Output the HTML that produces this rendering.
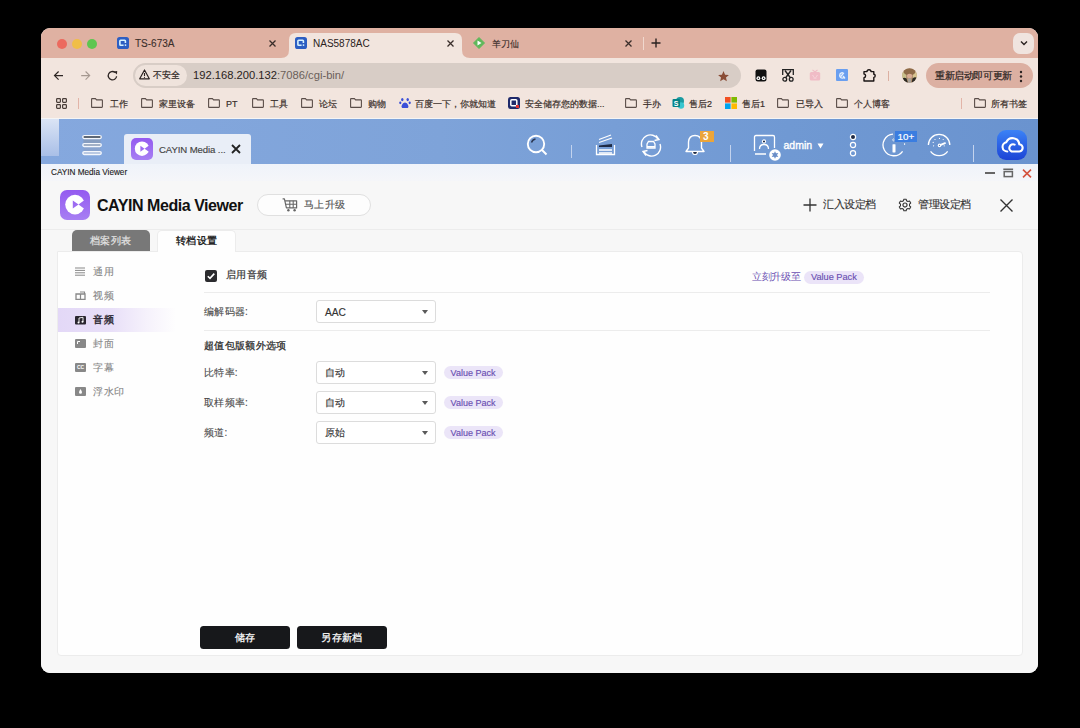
<!DOCTYPE html>
<html><head><meta charset="utf-8">
<style>
*{margin:0;padding:0;box-sizing:border-box}
html,body{width:1080px;height:728px;background:#000;overflow:hidden;font-family:"Liberation Sans",sans-serif;color:#222}
.a{position:absolute}
#win{position:absolute;left:41px;top:28px;width:997px;height:645px;border-radius:9px;overflow:hidden;background:#f5f5f5}
#pg{position:absolute;left:-41px;top:-28px;width:1080px;height:728px}
.dot{position:absolute;width:10px;height:10px;border-radius:50%}
.t{position:absolute;white-space:nowrap;line-height:1}
.fav{position:absolute;width:12px;height:12px}
.folder{position:absolute;width:12px;height:10px}
.bm{position:absolute;top:100px;font-size:9px;color:#3b302c;-webkit-text-stroke:0.2px #3b302c;white-space:nowrap;line-height:9px}
#qts{left:41px;top:118px;width:997px;height:46px;background:#7ea3d9}
#wtitle{left:41px;top:164px;width:997px;height:17px;background:#f7f8fa}
#app{left:41px;top:181px;width:997px;height:491px;background:#f5f5f5}
#panel{position:absolute;left:57px;top:251px;width:965px;height:405px;background:#fdfdfd;border:1px solid #ececec;border-radius:4px}
.sel{width:120px;height:23px;border:1px solid #dcdcdc;border-radius:3px;background:#fff}
.sel span{position:absolute;left:8px;top:6px;font-size:10.4px;color:#333;-webkit-text-stroke:0.15px #333;line-height:1;white-space:nowrap}
.sel:after{content:"";position:absolute;right:7px;top:9px;border-left:3px solid transparent;border-right:3px solid transparent;border-top:4px solid #5a5a5a}
.vp{width:59px;height:13px;border-radius:7px;background:#ebe5f8;color:#6a4fb2;-webkit-text-stroke:0.15px #6a4fb2;font-size:9px;line-height:14.5px;text-align:center;white-space:nowrap}
.btn{height:23px;border-radius:3.5px;background:#17181b;color:#fff;font-size:10px;letter-spacing:0.3px;-webkit-text-stroke:0.25px #fff;line-height:23px;text-align:center;white-space:nowrap}
</style></head><body>
<div id="win"><div id="pg">
<!-- ===== browser chrome ===== -->
<div class="a" style="left:41px;top:28px;width:997px;height:30px;background:#dfb1a2"></div>
<div class="a" style="left:41px;top:58px;width:997px;height:60px;background:#f2e5de"></div>
<div class="dot" style="left:57px;top:39px;background:#ec6a5e"></div>
<div class="dot" style="left:72px;top:39px;background:#f0be48"></div>
<div class="dot" style="left:87px;top:39px;background:#5ec650"></div>
<!-- tab 1 -->
<div class="fav" style="left:117px;top:37px"><svg width="12" height="12" viewBox="0 0 12 12" style="position:absolute;left:0;top:0"><rect x="0" y="0" width="12" height="12" rx="2.6" fill="#2d5ec2"/><path d="M8.4 6V3.9Q8.4 3.2 7.7 3.2H3.6Q2.9 3.2 2.9 3.9V7.5Q2.9 8.2 3.6 8.2H6.6" fill="none" stroke="#d6f2ff" stroke-width="1.6"/><circle cx="8.5" cy="8.1" r="0.9" fill="#d6f2ff"/></svg></div>
<div class="t" style="left:135px;top:39px;font-size:10px;color:#3a2e2a;-webkit-text-stroke:0.1px #3a2e2a">TS-673A</div>
<svg class="a" style="left:268px;top:39px" width="9" height="9" viewBox="0 0 9 9"><path d="M1.5 1.5L7.5 7.5M7.5 1.5L1.5 7.5" stroke="#3a2e2a" stroke-width="1.3"/></svg>
<!-- active tab -->
<svg class="a" style="left:281px;top:32px" width="190" height="27" viewBox="0 0 190 27"><path d="M0 26 Q8 26 8 18 L8 8 Q8 1 15 1 L174 1 Q181 1 181 8 L181 18 Q181 26 189 26 L189 27 L0 27Z" fill="#f2e5de"/></svg>
<div class="fav" style="left:295px;top:37px"><svg width="12" height="12" viewBox="0 0 12 12" style="position:absolute;left:0;top:0"><rect x="0" y="0" width="12" height="12" rx="2.6" fill="#2d5ec2"/><path d="M8.4 6V3.9Q8.4 3.2 7.7 3.2H3.6Q2.9 3.2 2.9 3.9V7.5Q2.9 8.2 3.6 8.2H6.6" fill="none" stroke="#d6f2ff" stroke-width="1.6"/><circle cx="8.5" cy="8.1" r="0.9" fill="#d6f2ff"/></svg></div>
<div class="t" style="left:313px;top:39px;font-size:10px;color:#2a2220">NAS5878AC</div>
<svg class="a" style="left:446px;top:39px" width="9" height="9" viewBox="0 0 9 9"><path d="M1.5 1.5L7.5 7.5M7.5 1.5L1.5 7.5" stroke="#3a2e2a" stroke-width="1.3"/></svg>
<!-- tab 3 -->
<svg class="a" style="left:473px;top:37px" width="12" height="12" viewBox="0 0 12 12"><path d="M6 0.5 L11.5 6 L6 11.5 L0.5 6Z" fill="#5fb85a" stroke="#5fb85a" stroke-width="1" stroke-linejoin="round"/><path d="M4.5 3.5 L8.5 6 L4.5 8.5Z" fill="#fff"/></svg>
<div class="t" style="left:491.5px;top:39.5px;font-size:9px;letter-spacing:0.4px;color:#3a2e2a;-webkit-text-stroke:0.15px #3a2e2a">羊刀仙</div>
<svg class="a" style="left:624px;top:39px" width="9" height="9" viewBox="0 0 9 9"><path d="M1.5 1.5L7.5 7.5M7.5 1.5L1.5 7.5" stroke="#3a2e2a" stroke-width="1.3"/></svg>
<div class="a" style="left:643px;top:37px;width:1px;height:13px;background:#f0d8ce"></div>
<svg class="a" style="left:651px;top:38px" width="10" height="10" viewBox="0 0 10 10"><path d="M5 0.5V9.5M0.5 5H9.5" stroke="#2a2220" stroke-width="1.4"/></svg>
<!-- tab dropdown -->
<div class="a" style="left:1013px;top:33px;width:21px;height:21px;border-radius:7px;background:#f0e4df"></div>
<svg class="a" style="left:1019.5px;top:40px" width="8" height="6" viewBox="0 0 8 6"><path d="M1 1.5L4 4.5L7 1.5" stroke="#2a2220" stroke-width="1.4" fill="none"/></svg>
<!-- toolbar -->
<svg class="a" style="left:53px;top:70px" width="12" height="12" viewBox="0 0 12 12"><path d="M10 5.6H1.6M5.6 1.5L1.5 5.6L5.6 9.7" stroke="#2e2624" stroke-width="1.2" fill="none"/></svg>
<svg class="a" style="left:80px;top:70px" width="12" height="12" viewBox="0 0 12 12"><path d="M1.2 5.6H9.6M5.6 1.5L9.7 5.6L5.6 9.7" stroke="#a59890" stroke-width="1.1" fill="none"/></svg>
<svg class="a" style="left:107px;top:70px" width="12" height="12" viewBox="0 0 12 12"><path d="M9.6 6.2A4.2 4.2 0 1 1 8 2.4" stroke="#2e2624" stroke-width="1.3" fill="none"/><path d="M6.6 1.6L10.2 0.9L10 4.6Z" fill="#2e2624"/></svg>
<div class="a" style="left:133px;top:63px;width:608px;height:25px;border-radius:13px;background:#d8cdc6"></div>
<div class="a" style="left:135px;top:65px;width:52px;height:21px;border-radius:11px;background:#efe3dc"></div>
<svg class="a" style="left:139px;top:69px" width="11" height="11" viewBox="0 0 11 11"><path d="M5.5 1L10.3 9.8H0.7Z" stroke="#2a2220" stroke-width="1.2" fill="none" stroke-linejoin="round"/><path d="M5.5 4V7" stroke="#2a2220" stroke-width="1.1"/><circle cx="5.5" cy="8.3" r="0.6" fill="#2a2220"/></svg>
<div class="t" style="left:153px;top:70.5px;font-size:9px;color:#2a2220;-webkit-text-stroke:0.2px #2a2220">不安全</div>
<div class="t" style="left:193px;top:70px;font-size:11.2px;color:#2a2220">192.168.200.132<span style="color:#6b5f5a">:7086/cgi-bin/</span></div>
<svg class="a" style="left:717px;top:70px" width="13" height="13" viewBox="0 0 24 24"><path d="M12 2l2.9 6.6 7.1.6-5.4 4.7 1.6 7-6.2-3.7-6.2 3.7 1.6-7L2 9.2l7.1-.6z" fill="#8a4d36"/></svg>
<!-- extensions -->
<svg class="a" style="left:755px;top:69px" width="12" height="13" viewBox="0 0 12 13"><path d="M2.5 0.5H9.5Q11.5 0.5 11.5 2.5V10Q11.5 12.5 9 12.5H3Q0.5 12.5 0.5 10V2.5Q0.5 0.5 2.5 0.5Z" fill="#111"/><circle cx="3.4" cy="9.2" r="1.9" fill="#fff"/><circle cx="8.6" cy="9.2" r="1.9" fill="#fff"/><circle cx="3.4" cy="9.2" r="0.7" fill="#111"/><circle cx="8.6" cy="9.2" r="0.7" fill="#111"/></svg>
<svg class="a" style="left:782px;top:69px" width="12" height="13" viewBox="0 0 12 13"><path d="M0.7 6V0.7H11.3V6" fill="none" stroke="#222" stroke-width="1.3"/><path d="M3 1.5L8.5 9M9 1.5L3.5 9" stroke="#222" stroke-width="1.4"/><circle cx="2.8" cy="10.2" r="1.9" fill="none" stroke="#222" stroke-width="1.3"/><circle cx="9.2" cy="10.2" r="1.9" fill="none" stroke="#222" stroke-width="1.3"/></svg>
<svg class="a" style="left:809px;top:69px" width="12" height="12" viewBox="0 0 12 12"><rect x="0.8" y="3" width="10.4" height="8.5" rx="1.5" fill="#f0bcc6"/><path d="M3.5 0.8L6 3M8.5 0.8L6 3" stroke="#f0bcc6" stroke-width="1.1" fill="none"/><path d="M3.5 6.5L5 7.5M8.5 6.5L7 7.5M4.5 9H7.5" stroke="#f8dce2" stroke-width="0.9"/></svg>
<svg class="a" style="left:836px;top:69px" width="12" height="12" viewBox="0 0 12 12"><rect x="0" y="0" width="12" height="12" rx="1" fill="#6a9ff0"/><path d="M8.5 8Q6.5 10 4.5 8.5Q3 7 4 5Q5.5 3 7.5 4.2L4.8 7.5" fill="none" stroke="#e6f0fd" stroke-width="1.3"/><path d="M7 7L9 9.5" stroke="#e6f0fd" stroke-width="1.3"/></svg>
<svg class="a" style="left:862px;top:69px" width="14" height="13" viewBox="0 0 14 13"><path d="M2 2.6H5Q5 0.8 7 0.8Q9 0.8 9 2.6H11.8V5.2Q13.2 5.2 13.2 6.8Q13.2 8.4 11.8 8.4V12H2V8.6Q3.6 8.6 3.6 6.8Q3.6 5 2 5Z" fill="none" stroke="#1a1414" stroke-width="1.4" stroke-linejoin="round"/></svg>
<div class="a" style="left:888px;top:71px;width:1px;height:10px;background:#dcb0a2"></div>
<svg class="a" style="left:902px;top:67.5px" width="15" height="15" viewBox="0 0 15 15"><defs><clipPath id="av"><circle cx="7.5" cy="7.5" r="7.3"/></clipPath></defs><g clip-path="url(#av)"><rect width="15" height="15" fill="#b09070"/><rect x="0" y="4" width="4" height="7" fill="#c8bf8a"/><rect x="11" y="4" width="4" height="6" fill="#d8c490"/><ellipse cx="7.5" cy="3.8" rx="6" ry="3.5" fill="#8e6a48"/><ellipse cx="7.6" cy="8" rx="2.6" ry="2.3" fill="#d9ab94"/><path d="M0 15V11Q2 9 4.5 10.5L6 15Z" fill="#2a2822"/><path d="M15 15V10Q13 8.5 10.5 10.5L9.5 15Z" fill="#2e2a24"/><rect x="6" y="10.5" width="3" height="4.5" fill="#a8a29a"/></g></svg>
<div class="a" style="left:926px;top:63px;width:107px;height:25px;border-radius:12.5px;background:#dcb0a2"></div>
<div class="t" style="left:935px;top:71px;font-size:9.5px;letter-spacing:-0.4px;color:#2a2220;-webkit-text-stroke:0.2px #2a2220">重新启动即可更新</div>
<svg class="a" style="left:1019px;top:70px" width="4" height="13" viewBox="0 0 4 13"><circle cx="2" cy="2" r="1.2" fill="#2a2220"/><circle cx="2" cy="6.5" r="1.2" fill="#2a2220"/><circle cx="2" cy="11" r="1.2" fill="#2a2220"/></svg>
<!-- bookmarks -->
<svg class="a" style="left:56px;top:98px" width="11" height="11" viewBox="0 0 11 11"><g fill="none" stroke="#4a3e39" stroke-width="1.2"><rect x="0.6" y="0.6" width="3.8" height="3.8" rx="0.8"/><rect x="6.6" y="0.6" width="3.8" height="3.8" rx="0.8"/><rect x="0.6" y="6.6" width="3.8" height="3.8" rx="0.8"/><rect x="6.6" y="6.6" width="3.8" height="3.8" rx="0.8"/></g></svg>
<div class="a" style="left:78px;top:98px;width:1px;height:11px;background:#e2b4a8"></div>
<svg class="a" style="left:91px;top:98px" width="12" height="10" viewBox="0 0 12 10"><path d="M0.6 1.2Q0.6 0.6 1.2 0.6H4.4L5.6 1.9H10.8Q11.4 1.9 11.4 2.5V8.8Q11.4 9.4 10.8 9.4H1.2Q0.6 9.4 0.6 8.8Z" fill="none" stroke="#5a4d48" stroke-width="1.1"/></svg>
<div class="bm" style="left:110px">工作</div>
<svg class="a" style="left:141px;top:98px" width="12" height="10" viewBox="0 0 12 10"><path d="M0.6 1.2Q0.6 0.6 1.2 0.6H4.4L5.6 1.9H10.8Q11.4 1.9 11.4 2.5V8.8Q11.4 9.4 10.8 9.4H1.2Q0.6 9.4 0.6 8.8Z" fill="none" stroke="#5a4d48" stroke-width="1.1"/></svg>
<div class="bm" style="left:159px">家里设备</div>
<svg class="a" style="left:208px;top:98px" width="12" height="10" viewBox="0 0 12 10"><path d="M0.6 1.2Q0.6 0.6 1.2 0.6H4.4L5.6 1.9H10.8Q11.4 1.9 11.4 2.5V8.8Q11.4 9.4 10.8 9.4H1.2Q0.6 9.4 0.6 8.8Z" fill="none" stroke="#5a4d48" stroke-width="1.1"/></svg>
<div class="bm" style="left:226px">PT</div>
<svg class="a" style="left:252px;top:98px" width="12" height="10" viewBox="0 0 12 10"><path d="M0.6 1.2Q0.6 0.6 1.2 0.6H4.4L5.6 1.9H10.8Q11.4 1.9 11.4 2.5V8.8Q11.4 9.4 10.8 9.4H1.2Q0.6 9.4 0.6 8.8Z" fill="none" stroke="#5a4d48" stroke-width="1.1"/></svg>
<div class="bm" style="left:270px">工具</div>
<svg class="a" style="left:301px;top:98px" width="12" height="10" viewBox="0 0 12 10"><path d="M0.6 1.2Q0.6 0.6 1.2 0.6H4.4L5.6 1.9H10.8Q11.4 1.9 11.4 2.5V8.8Q11.4 9.4 10.8 9.4H1.2Q0.6 9.4 0.6 8.8Z" fill="none" stroke="#5a4d48" stroke-width="1.1"/></svg>
<div class="bm" style="left:319px">论坛</div>
<svg class="a" style="left:350px;top:98px" width="12" height="10" viewBox="0 0 12 10"><path d="M0.6 1.2Q0.6 0.6 1.2 0.6H4.4L5.6 1.9H10.8Q11.4 1.9 11.4 2.5V8.8Q11.4 9.4 10.8 9.4H1.2Q0.6 9.4 0.6 8.8Z" fill="none" stroke="#5a4d48" stroke-width="1.1"/></svg>
<div class="bm" style="left:368px">购物</div>
<svg class="a" style="left:625px;top:98px" width="12" height="10" viewBox="0 0 12 10"><path d="M0.6 1.2Q0.6 0.6 1.2 0.6H4.4L5.6 1.9H10.8Q11.4 1.9 11.4 2.5V8.8Q11.4 9.4 10.8 9.4H1.2Q0.6 9.4 0.6 8.8Z" fill="none" stroke="#5a4d48" stroke-width="1.1"/></svg>
<div class="bm" style="left:643px">手办</div>
<svg class="a" style="left:777px;top:98px" width="12" height="10" viewBox="0 0 12 10"><path d="M0.6 1.2Q0.6 0.6 1.2 0.6H4.4L5.6 1.9H10.8Q11.4 1.9 11.4 2.5V8.8Q11.4 9.4 10.8 9.4H1.2Q0.6 9.4 0.6 8.8Z" fill="none" stroke="#5a4d48" stroke-width="1.1"/></svg>
<div class="bm" style="left:796px">已导入</div>
<svg class="a" style="left:836px;top:98px" width="12" height="10" viewBox="0 0 12 10"><path d="M0.6 1.2Q0.6 0.6 1.2 0.6H4.4L5.6 1.9H10.8Q11.4 1.9 11.4 2.5V8.8Q11.4 9.4 10.8 9.4H1.2Q0.6 9.4 0.6 8.8Z" fill="none" stroke="#5a4d48" stroke-width="1.1"/></svg>
<div class="bm" style="left:854px">个人博客</div>
<svg class="a" style="left:974px;top:98px" width="12" height="10" viewBox="0 0 12 10"><path d="M0.6 1.2Q0.6 0.6 1.2 0.6H4.4L5.6 1.9H10.8Q11.4 1.9 11.4 2.5V8.8Q11.4 9.4 10.8 9.4H1.2Q0.6 9.4 0.6 8.8Z" fill="none" stroke="#5a4d48" stroke-width="1.1"/></svg>
<div class="bm" style="left:991px">所有书签</div>
<svg class="a" style="left:399px;top:97px" width="12" height="12" viewBox="0 0 12 12"><g fill="#3b4fd8"><ellipse cx="3.3" cy="2.6" rx="1.2" ry="1.6"/><ellipse cx="8.7" cy="2.6" rx="1.2" ry="1.6"/><ellipse cx="1.3" cy="5.8" rx="1.1" ry="1.4"/><ellipse cx="10.7" cy="5.8" rx="1.1" ry="1.4"/><path d="M6 5.5C4 5.5 2.2 8.5 2.6 10C3 11.6 5 11 6 11C7 11 9 11.6 9.4 10C9.8 8.5 8 5.5 6 5.5Z"/></g></svg>
<div class="bm" style="left:415px">百度一下，你就知道</div>
<svg class="a" style="left:508px;top:97px" width="12" height="12" viewBox="0 0 12 12"><rect x="0" y="0" width="12" height="12" rx="2.5" fill="#1f2a6b"/><rect x="2.8" y="2.8" width="6" height="6" rx="1" fill="none" stroke="#fff" stroke-width="1.5"/><rect x="8" y="8" width="3" height="3" fill="#e03030"/></svg>
<div class="bm" style="left:525px">安全储存您的数据...</div>
<svg class="a" style="left:672px;top:97px" width="13" height="12" viewBox="0 0 13 12"><circle cx="8" cy="4" r="4" fill="#1a9ba1"/><circle cx="9" cy="8.5" r="3.2" fill="#37c6d0"/><rect x="0.5" y="2" width="7.5" height="8" rx="1" fill="#038387"/><text x="4.2" y="8.6" font-size="7" font-family="Liberation Sans" font-weight="bold" fill="#fff" text-anchor="middle">S</text></svg>
<div class="bm" style="left:689px">售后2</div>
<svg class="a" style="left:725px;top:97px" width="12" height="12" viewBox="0 0 12 12"><rect x="0" y="0" width="5.6" height="5.6" fill="#f25022"/><rect x="6.4" y="0" width="5.6" height="5.6" fill="#7fba00"/><rect x="0" y="6.4" width="5.6" height="5.6" fill="#00a4ef"/><rect x="6.4" y="6.4" width="5.6" height="5.6" fill="#ffb900"/></svg>
<div class="bm" style="left:742px">售后1</div>
<div class="a" style="left:961px;top:98px;width:1px;height:11px;background:#e2b4a8"></div>

<!-- ===== QTS header ===== -->
<div class="a" style="left:41px;top:118.5px;width:997px;height:45.5px;background:linear-gradient(90deg,#85a8de 0%,#7ea3d9 40%,#7099d3 75%,#6a93cf 100%)"></div>
<div class="a" style="left:41px;top:118.5px;width:17.5px;height:37.5px;background:linear-gradient(180deg,#dae4f5,#a9bfe7)"></div>
<svg class="a" style="left:81px;top:134px" width="22" height="22" viewBox="0 0 22 22"><rect x="2.5" y="3.5" width="17" height="6" fill="#8799b4" opacity="0.7"/><rect x="2.5" y="12" width="17" height="5" fill="#8da0c0" opacity="0.5"/><g stroke="#f4f7fc" stroke-width="1.3"><rect x="1.8" y="1.6" width="18.5" height="2.9" rx="1.45" fill="#2c3848"/><rect x="1.8" y="9.6" width="18.5" height="2.9" rx="1.45" fill="#8799b4"/><rect x="1.8" y="17.6" width="18.5" height="2.9" rx="1.45" fill="#a9bbdb"/></g></svg>
<div class="a" style="left:124px;top:134px;width:127px;height:30px;border-radius:3px 3px 0 0;background:#e9eef7"></div>
<div class="a" style="left:131px;top:138px;width:22px;height:22px;border-radius:5px;background:linear-gradient(180deg,#945af0,#a77ff3)"></div>
<svg class="a" style="left:131px;top:138px" width="22" height="22" viewBox="0 0 30 30"><defs><mask id="lm2"><rect width="30" height="30" fill="#fff"/><path d="M12.8 10.4L18.5 14.5L28 7.6V21.4L18.5 14.5L12.8 18.6Z" fill="#000"/></mask></defs><circle cx="15" cy="14.6" r="9.8" fill="#fff" mask="url(#lm2)"/></svg>
<div class="t" style="left:159px;top:144.5px;font-size:9.6px;letter-spacing:-0.1px;color:#444;-webkit-text-stroke:0.15px #444">CAYIN Media ...</div>
<svg class="a" style="left:231px;top:144px" width="10" height="10" viewBox="0 0 10 10"><path d="M1 1L9 9M9 1L1 9" stroke="#222" stroke-width="1.8"/></svg>
<!-- right icons -->
<svg class="a" style="left:526px;top:134px" width="22" height="22" viewBox="0 0 22 22"><circle cx="10" cy="10" r="8.2" fill="none" stroke="#fff" stroke-width="1.9"/><path d="M16 16L20.5 20.5" stroke="#fff" stroke-width="1.9"/><path d="M5.5 8.5Q6.5 5.5 9.5 5" stroke="#2a3550" stroke-width="1.5" fill="none"/></svg>
<div class="a" style="left:571px;top:145px;width:1px;height:13px;background:#c3d3ee"></div>
<svg class="a" style="left:594px;top:134px" width="23" height="22" viewBox="0 0 23 22"><path d="M2.5 11V20.5H20.5V11" fill="none" stroke="#fff" stroke-width="1.3"/><path d="M5 19H18" stroke="#fff" stroke-width="1.3"/><path d="M5 16H18" stroke="#fff" stroke-width="1.3"/><path d="M5 11.5L18 10V13H5Z" fill="#1e2a44"/><path d="M5 8.5L18 4" stroke="#fff" stroke-width="1.3"/><path d="M5 5.5L17 1" stroke="#fff" stroke-width="1.2"/></svg>
<svg class="a" style="left:639px;top:134px" width="24" height="23" viewBox="0 0 24 23"><path d="M3 13A9 9 0 0 1 19 5" fill="none" stroke="#fff" stroke-width="1.4"/><path d="M17 1.5L20 5.5L15.5 6.5" fill="none" stroke="#fff" stroke-width="1.4"/><path d="M21 10A9 9 0 0 1 5 18" fill="none" stroke="#fff" stroke-width="1.4"/><path d="M7 21.5L4 17.5L8.5 16.5" fill="none" stroke="#fff" stroke-width="1.4"/><path d="M8 10L9.5 7.5H14.5L16 10V14H8Z" fill="none" stroke="#fff" stroke-width="1.3"/><rect x="8" y="12" width="8" height="1.5" fill="#fff"/></svg>
<svg class="a" style="left:684px;top:133px" width="22" height="23" viewBox="0 0 22 23"><path d="M11 2.5Q5 2.5 4.5 9V15L2 18.5H20L17.5 15V9Q17 2.5 11 2.5Z" fill="none" stroke="#fff" stroke-width="1.4" stroke-linejoin="round"/><path d="M8.5 19Q8.5 21.5 11 21.5Q13.5 21.5 13.5 19" fill="#1e2a44" stroke="#fff" stroke-width="1.2"/></svg>
<div class="a" style="left:700px;top:131px;width:14px;height:11px;background:#eba53a"></div>
<div class="t" style="left:703px;top:131.5px;font-size:10px;color:#fff;font-weight:bold">3</div>
<div class="a" style="left:730px;top:145px;width:1px;height:17px;background:#c3d3ee"></div>
<svg class="a" style="left:753px;top:134px" width="24" height="24" viewBox="0 0 24 24"><path d="M1.5 17V3Q1.5 1.5 3 1.5H20Q21.5 1.5 21.5 3V14" fill="none" stroke="#fff" stroke-width="1.3"/><circle cx="11" cy="7.5" r="1.6" fill="#1e2a44" stroke="#fff" stroke-width="1.1"/><path d="M6.5 15Q6.5 10.5 11 10.5Q15.5 10.5 15.5 15" fill="none" stroke="#fff" stroke-width="1.3"/><path d="M2 20H13" stroke="#fff" stroke-width="1.5"/></svg>
<svg class="a" style="left:768px;top:149px" width="14" height="12" viewBox="0 0 14 12"><circle cx="7" cy="6" r="5.8" fill="#fff"/><path d="M7 2.2L8 4.3L10.3 4.1L9 6L10.3 7.9L8 7.7L7 9.8L6 7.7L3.7 7.9L5 6L3.7 4.1L6 4.3Z" fill="#6b8fc8"/></svg>
<div class="t" style="left:783.5px;top:139.5px;font-size:10.5px;color:#fff;-webkit-text-stroke:0.35px #fff">admin</div>
<svg class="a" style="left:816.5px;top:142.5px" width="7" height="6" viewBox="0 0 7 6"><path d="M0.5 0.5H6.5L3.5 5.5Z" fill="#fff"/></svg>
<svg class="a" style="left:849px;top:133px" width="8" height="25" viewBox="0 0 8 25"><circle cx="4" cy="4" r="2.6" fill="#1e2a44" stroke="#fff" stroke-width="1.2"/><circle cx="4" cy="12" r="2.6" fill="none" stroke="#fff" stroke-width="1.2"/><circle cx="4" cy="20.3" r="2.6" fill="none" stroke="#fff" stroke-width="1.2"/></svg>
<svg class="a" style="left:882px;top:133px" width="24" height="24" viewBox="0 0 24 24"><path d="M11 1.2A10.8 10.8 0 1 0 20.6 18.3" fill="none" stroke="#fff" stroke-width="1.3"/><rect x="10.5" y="11.3" width="3" height="8.2" rx="0.4" fill="#fff"/><path d="M12.2 6.3A0.9 0.9 0 1 0 12.2 7.5" fill="none" stroke="#fff" stroke-width="0.8"/><path d="M22.6 10.2V12" stroke="#fff" stroke-width="0.9"/></svg>
<div class="a" style="left:895px;top:131px;width:21.5px;height:10.5px;background:#3a7de0"></div>
<div class="t" style="left:897.5px;top:131.5px;font-size:9.8px;color:#fff;-webkit-text-stroke:0.2px #fff">10+</div>
<svg class="a" style="left:927px;top:133px" width="24" height="24" viewBox="0 0 24 24"><path d="M1.4 12A10.7 10.7 0 0 1 22.8 12" fill="none" stroke="#fff" stroke-width="1.3"/><path d="M20.65 18.44A10.7 10.7 0 0 1 3.55 18.44" fill="none" stroke="#fff" stroke-width="1.3"/><path d="M12.5 12.4L18 10.2" stroke="#fff" stroke-width="1.9" stroke-linecap="round"/><circle cx="12.5" cy="12.4" r="1.8" fill="#fff"/><circle cx="12.5" cy="12.4" r="0.6" fill="#5a7fb8"/><g fill="#fff"><circle cx="8" cy="6.5" r="0.6"/><circle cx="12.5" cy="5.4" r="0.6"/><circle cx="16.2" cy="6.5" r="0.6"/><circle cx="6.2" cy="9.4" r="0.6"/><circle cx="6.6" cy="12.8" r="0.6"/><circle cx="17.2" cy="12.8" r="0.6"/></g></svg>
<div class="a" style="left:973px;top:145px;width:1px;height:17px;background:#c3d3ee"></div>
<div class="a" style="left:997px;top:130px;width:30px;height:30px;border-radius:9px;background:linear-gradient(180deg,#3b82f6,#1c44d6)"></div>
<svg class="a" style="left:997px;top:130px" width="30" height="30" viewBox="0 0 30 30"><path d="M10.3 21.5A4.7 4.7 0 0 1 9.3 12.2A6.8 6.8 0 0 1 22.3 14.3A3.6 3.6 0 0 1 21.8 21.5H14.6A3.4 3.4 0 0 1 17.6 14.6" fill="none" stroke="#fff" stroke-width="2.1" stroke-linecap="round" stroke-linejoin="round"/></svg>
<!-- ===== window title bar ===== -->
<div class="a" style="left:41px;top:164px;width:997px;height:17px;background:linear-gradient(180deg,#eff3fa,#f5f6f9)"></div>
<div class="t" style="left:51px;top:168.5px;font-size:8.2px;color:#222;-webkit-text-stroke:0.12px #222">CAYIN Media Viewer</div>
<div class="a" style="left:985px;top:172px;width:10px;height:2.2px;background:#666"></div>
<svg class="a" style="left:1003px;top:168px" width="11" height="10" viewBox="0 0 11 10"><rect x="0.3" y="0.5" width="9.8" height="1.6" fill="#666"/><rect x="1.2" y="3.6" width="8.2" height="5" fill="none" stroke="#666" stroke-width="1.5"/></svg>
<svg class="a" style="left:1021.5px;top:168.5px" width="10" height="9" viewBox="0 0 10 9"><path d="M1 0.7L9 8.3M9 0.7L1 8.3" stroke="#d4533f" stroke-width="1.6"/></svg>
<!-- ===== app ===== -->
<div class="a" style="left:41px;top:181px;width:997px;height:492px;background:#f7f7f7"></div>
<div class="a" style="left:60px;top:190px;width:30px;height:30px;border-radius:7px;background:linear-gradient(180deg,#945af0,#a77ff3)"></div>
<svg class="a" style="left:60px;top:190px" width="30" height="30" viewBox="0 0 30 30"><defs><mask id="lm1"><rect width="30" height="30" fill="#fff"/><path d="M12.8 10.4L18.5 14.5L28 7.6V21.4L18.5 14.5L12.8 18.6Z" fill="#000"/></mask></defs><circle cx="15" cy="14.6" r="9.8" fill="#fff" mask="url(#lm1)"/></svg>
<div class="t" style="left:97px;top:198px;font-size:16px;letter-spacing:-0.45px;color:#111;font-weight:bold">CAYIN Media Viewer</div>
<div class="a" style="left:257px;top:194px;width:114px;height:22px;border-radius:11px;background:#fdfdfd;border:1px solid #e0e0e0"></div>
<svg class="a" style="left:282px;top:198px" width="16" height="14" viewBox="0 0 16 14"><path d="M0.6 0.9H2.4L4.4 9.9H14.6V2.8H3" fill="none" stroke="#666" stroke-width="1.2" stroke-linejoin="round"/><path d="M7.8 2.8V9.9M11.2 2.8V9.9M3.8 6.3H14.6" stroke="#666" stroke-width="1.1"/><circle cx="6.4" cy="12.2" r="1.2" fill="#666"/><circle cx="12.6" cy="12.2" r="1.2" fill="#666"/></svg>
<div class="t" style="left:304px;top:200px;font-size:10px;letter-spacing:0.35px;color:#555;-webkit-text-stroke:0.15px #555">马上升级</div>
<svg class="a" style="left:803px;top:198px" width="14" height="14" viewBox="0 0 14 14"><path d="M7 0.5V13.5M0.5 7H13.5" stroke="#333" stroke-width="1.3"/></svg>
<div class="t" style="left:823px;top:199px;font-size:11px;letter-spacing:-0.5px;color:#333;-webkit-text-stroke:0.15px #333">汇入设定档</div>
<svg class="a" style="left:898px;top:198px" width="14" height="14" viewBox="0 0 24 24"><path d="M12 15.5A3.5 3.5 0 1 0 12 8.5A3.5 3.5 0 1 0 12 15.5Z" fill="none" stroke="#333" stroke-width="2"/><path d="M10 2H14L14.6 4.8L17 6.1L19.8 5.2L21.8 8.6L19.7 10.6V13.4L21.8 15.4L19.8 18.8L17 17.9L14.6 19.2L14 22H10L9.4 19.2L7 17.9L4.2 18.8L2.2 15.4L4.3 13.4V10.6L2.2 8.6L4.2 5.2L7 6.1L9.4 4.8Z" fill="none" stroke="#333" stroke-width="1.8" stroke-linejoin="round"/></svg>
<div class="t" style="left:918px;top:199px;font-size:11px;letter-spacing:-0.5px;color:#333;-webkit-text-stroke:0.15px #333">管理设定档</div>
<svg class="a" style="left:999px;top:198px" width="15" height="15" viewBox="0 0 15 15"><path d="M1.5 1.5L13.5 13.5M13.5 1.5L1.5 13.5" stroke="#333" stroke-width="1.4"/></svg>
<!-- app tabs -->
<div class="a" style="left:41px;top:229px;width:997px;height:1px;background:#ececec"></div>
<div class="a" style="left:72px;top:230px;width:78px;height:22px;border-radius:5px 5px 0 0;background:#787878"></div>
<div class="t" style="left:90px;top:236px;font-size:10px;letter-spacing:0.4px;color:#e4e4e4;-webkit-text-stroke:0.2px #e4e4e4">档案列表</div>
<div class="a" style="left:157px;top:230px;width:79px;height:22px;border-radius:5px 5px 0 0;background:#fefefe;border:1px solid #ececec;border-bottom:none"></div>
<div class="t" style="left:176px;top:236px;font-size:10px;letter-spacing:0.4px;color:#111;-webkit-text-stroke:0.3px #111">转档设置</div>
<div class="a" style="left:57px;top:251px;width:966px;height:405px;background:#fefefe;border:1px solid #ececec;border-radius:0 4px 4px 4px"></div>
<div class="a" style="left:158px;top:250px;width:77px;height:3px;background:#fefefe"></div>

<!-- sidebar -->
<div class="a" style="left:58px;top:308px;width:118px;height:24px;background:linear-gradient(90deg,#e3d8f7 0%,#e8dff8 45%,rgba(240,233,250,0.6) 75%,rgba(253,253,253,0) 100%)"></div>
<svg class="a" style="left:75px;top:267px" width="10" height="9" viewBox="0 0 10 9"><path d="M0 1H10M0 3.4H10M0 5.8H10M0 8.2H10" stroke="#888" stroke-width="1"/></svg>
<div class="t" style="left:93px;top:267px;font-size:10px;letter-spacing:0.5px;color:#858585;-webkit-text-stroke:0.1px #858585">通用</div>
<svg class="a" style="left:75px;top:291px" width="11" height="9" viewBox="0 0 11 9"><path d="M1 3H10V8.5H1Z" fill="none" stroke="#888" stroke-width="1.3"/><path d="M5.5 3V8.5" stroke="#888" stroke-width="1.2"/><path d="M5 1H9.5V3" fill="none" stroke="#888" stroke-width="1.1"/></svg>
<div class="t" style="left:93px;top:291px;font-size:10px;letter-spacing:0.5px;color:#858585;-webkit-text-stroke:0.1px #858585">视频</div>
<svg class="a" style="left:75px;top:315px" width="11" height="10" viewBox="0 0 11 10"><rect x="0" y="1" width="11" height="8.5" rx="1" fill="#2a2630"/><path d="M4 7.5V3L8 2.3V6.8" stroke="#fff" stroke-width="0.9" fill="none"/><circle cx="3.5" cy="7.5" r="1" fill="#fff"/><circle cx="7.5" cy="6.8" r="1" fill="#fff"/></svg>
<div class="t" style="left:93px;top:314.5px;font-size:10px;letter-spacing:0.5px;color:#2a2630;-webkit-text-stroke:0.35px #2a2630">音频</div>
<svg class="a" style="left:75px;top:339px" width="11" height="9" viewBox="0 0 11 9"><rect x="0" y="0" width="11" height="9" rx="1" fill="#888"/><path d="M2.5 2.5H5M2.5 2.5V5" stroke="#fff" stroke-width="1"/></svg>
<div class="t" style="left:93px;top:339px;font-size:10px;letter-spacing:0.5px;color:#858585;-webkit-text-stroke:0.1px #858585">封面</div>
<svg class="a" style="left:75px;top:363px" width="11" height="9" viewBox="0 0 11 9"><rect x="0" y="0" width="11" height="9" rx="1" fill="#888"/><text x="5.5" y="6.4" font-size="5" font-family="Liberation Sans" font-weight="bold" fill="#fff" text-anchor="middle">CC</text></svg>
<div class="t" style="left:93px;top:363px;font-size:10px;letter-spacing:0.5px;color:#858585;-webkit-text-stroke:0.1px #858585">字幕</div>
<svg class="a" style="left:75px;top:387px" width="11" height="9" viewBox="0 0 11 9"><rect x="0" y="0" width="11" height="9" rx="1" fill="#888"/><path d="M5.5 2Q4 4.2 4 5.2A1.5 1.5 0 0 0 7 5.2Q7 4.2 5.5 2Z" fill="#fff"/></svg>
<div class="t" style="left:93px;top:387px;font-size:10px;letter-spacing:0.5px;color:#858585;-webkit-text-stroke:0.1px #858585">浮水印</div>
<!-- content -->
<div class="a" style="left:205px;top:270px;width:12px;height:12px;border-radius:2px;background:#2b2b2e"></div>
<svg class="a" style="left:205px;top:270px" width="12" height="12" viewBox="0 0 12 12"><path d="M2.8 6.2L5 8.4L9.3 3.6" stroke="#fff" stroke-width="1.6" fill="none"/></svg>
<div class="t" style="left:226px;top:270px;font-size:10px;letter-spacing:0.4px;color:#333;-webkit-text-stroke:0.2px #333">启用音频</div>
<div class="t" style="left:752px;top:272px;font-size:10px;letter-spacing:-0.35px;color:#6a4fb2">立刻升级至</div>
<div class="a" style="left:804px;top:270.5px;width:60px;height:13px;border-radius:7px;background:#ebe4f8"></div>
<div class="t" style="left:811px;top:272.5px;font-size:9.2px;color:#6a4fb2;-webkit-text-stroke:0.15px #6a4fb2">Value Pack</div>
<div class="a" style="left:204px;top:291.5px;width:786px;height:1px;background:#ececec"></div>
<div class="t" style="left:204px;top:307px;font-size:10px;letter-spacing:0.25px;color:#4a4a4a;-webkit-text-stroke:0.1px #4a4a4a">编解码器:</div>
<div class="a sel" style="left:316px;top:300px"><span style="font-size:10.2px;top:7px">AAC</span></div>
<div class="a" style="left:204px;top:330px;width:786px;height:1px;background:#ececec"></div>
<div class="t" style="left:204px;top:341px;font-size:10px;letter-spacing:0.35px;color:#2a2a2a;-webkit-text-stroke:0.25px #2a2a2a">超值包版额外选项</div>
<div class="t" style="left:204px;top:367.5px;font-size:10px;letter-spacing:0.25px;color:#4a4a4a;-webkit-text-stroke:0.1px #4a4a4a">比特率:</div>
<div class="a sel" style="left:316px;top:361px"><span>自动</span></div>
<div class="a vp" style="left:443.5px;top:366px">Value Pack</div>
<div class="t" style="left:204px;top:397.5px;font-size:10px;letter-spacing:0.25px;color:#4a4a4a;-webkit-text-stroke:0.1px #4a4a4a">取样频率:</div>
<div class="a sel" style="left:316px;top:391px"><span>自动</span></div>
<div class="a vp" style="left:443.5px;top:396px">Value Pack</div>
<div class="t" style="left:204px;top:427.5px;font-size:10px;letter-spacing:0.25px;color:#4a4a4a;-webkit-text-stroke:0.1px #4a4a4a">频道:</div>
<div class="a sel" style="left:316px;top:421px"><span>原始</span></div>
<div class="a vp" style="left:443.5px;top:426px">Value Pack</div>
<div class="a btn" style="left:200px;top:626px;width:90px">储存</div>
<div class="a btn" style="left:297px;top:626px;width:90px">另存新档</div>

</div></div>
</body></html>
